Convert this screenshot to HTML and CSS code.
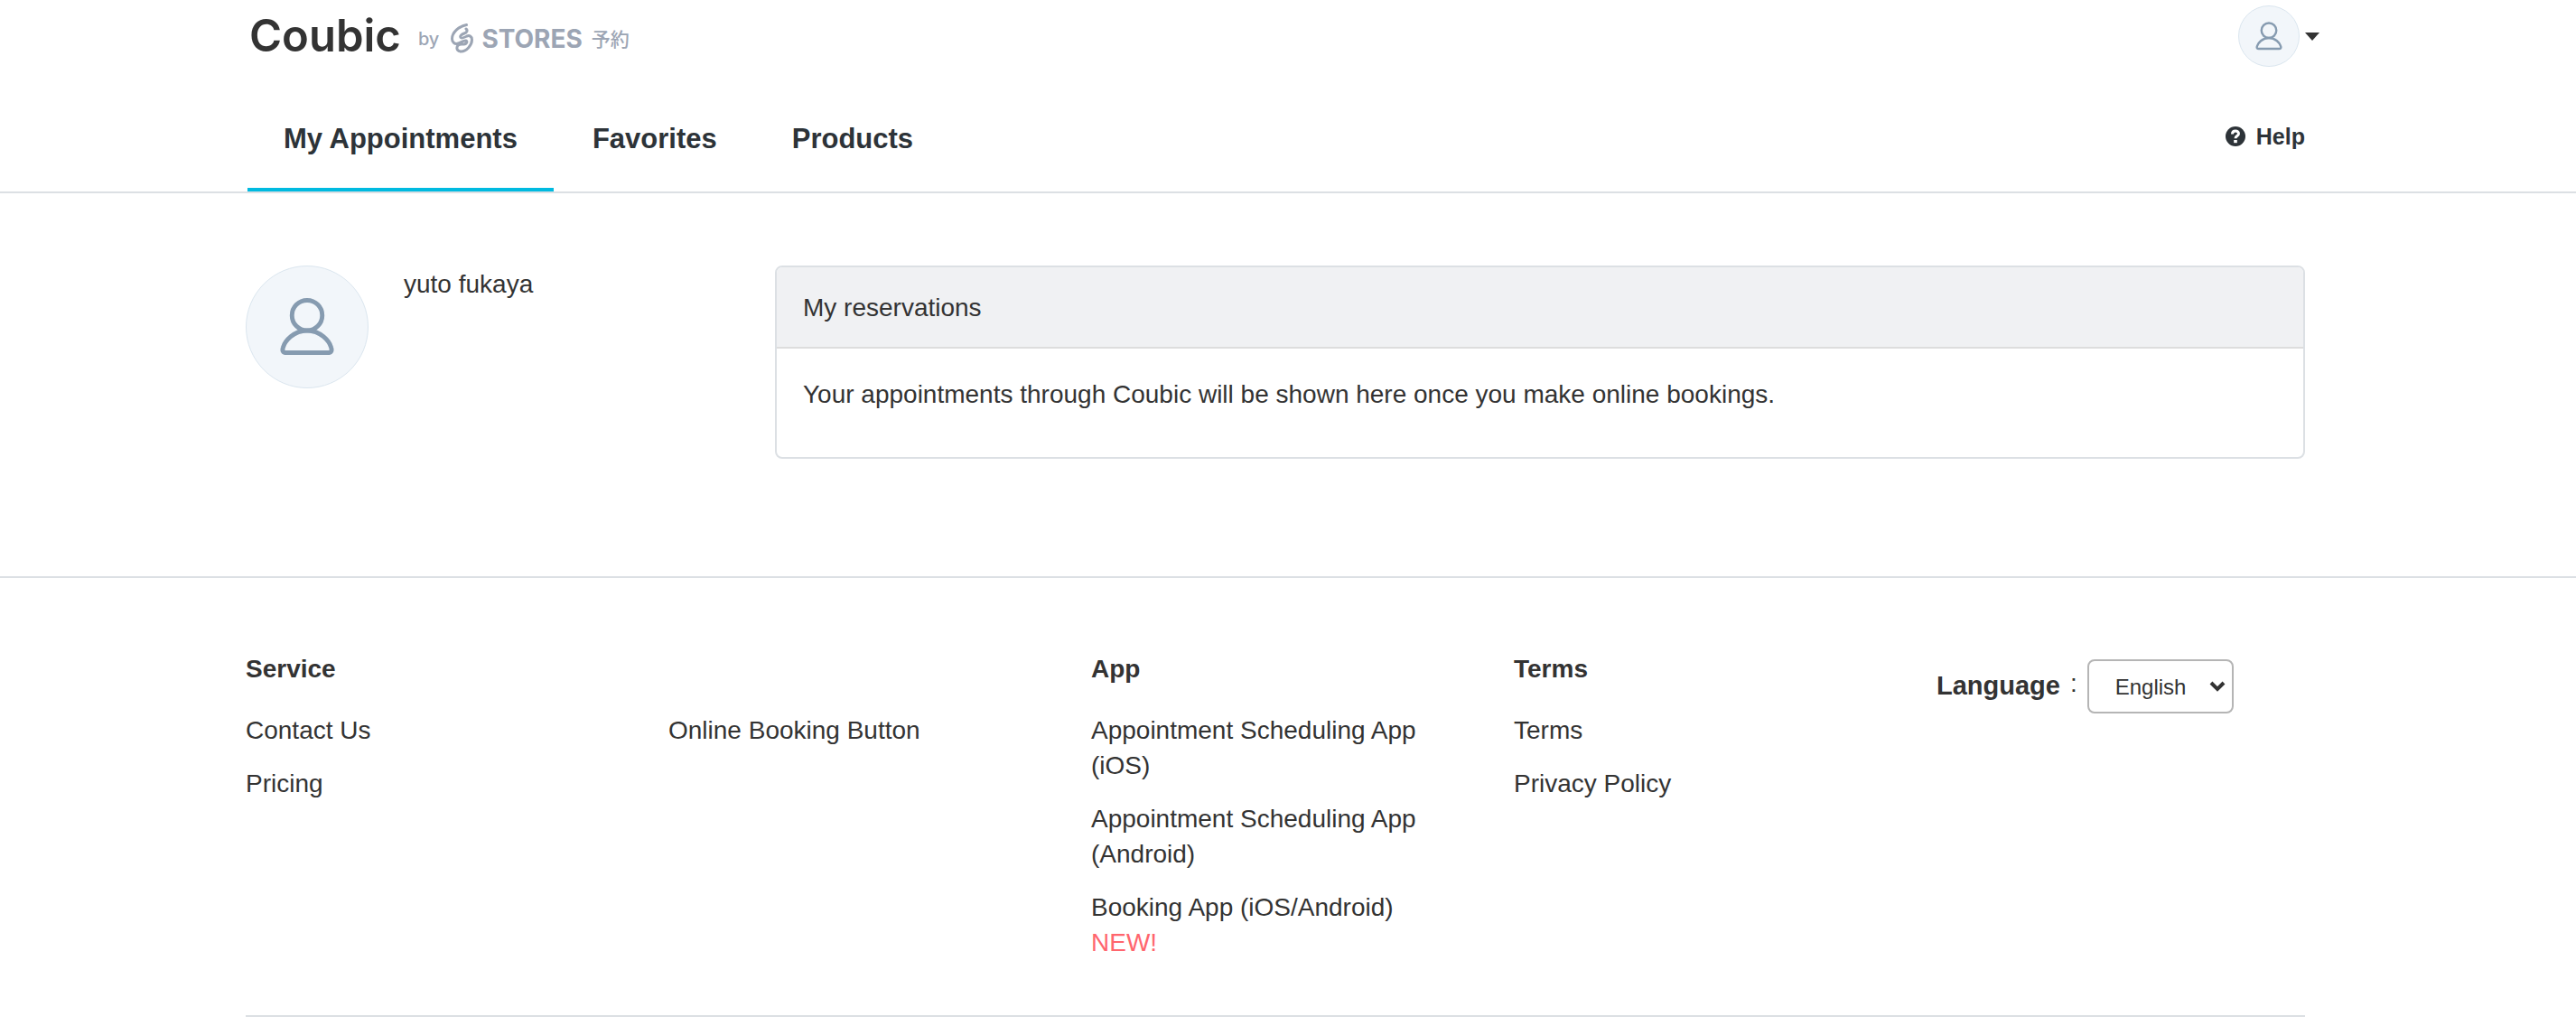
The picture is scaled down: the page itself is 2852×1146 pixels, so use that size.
FILE: index.html
```html
<!DOCTYPE html>
<html lang="en">
<head>
<meta charset="utf-8">
<title>My Appointments - Coubic</title>
<meta name="viewport" content="width=device-width, initial-scale=1">
<link rel="stylesheet" href="styles.css">
</head>
<body>
<svg class="defs" aria-hidden="true">
  <symbol id="person" viewBox="0 0 136 136">
    <circle cx="68" cy="55" r="17"/>
    <path d="M68 72C53 72 43 84 41 91Q39 97 45 97H91Q97 97 95 91C93 84 83 72 68 72Z"/>
  </symbol>
</svg>
<header class="header">
  <div class="container topbar">
    <a class="logo" href="#">
      <span class="logo-name">Coubic</span>
      <span class="logo-by">by</span>
      <svg class="logo-mark" viewBox="0 0 29 36" aria-hidden="true"><path d="M19.500 3.500C11 5 3.500 12 3.500 19c0 4 3 6.500 7 5 3-1 5-3 8-3 2.500 0 1.500 4-2 4-3 0-5-1-7 2-1.500 3 0 6 4 6 6 0 12-7 12-13 0-4-3-5-5.500-4-3 1.500-6 3-7 1.500s1-3.500 4-4.500 4-3.500 2-5"/></svg>
      <span class="logo-stores">STORES</span>
      <span class="logo-jp" lang="ja">予約</span>
    </a>
    <button class="account" type="button" aria-label="Account menu">
      <svg class="avatar avatar-small" aria-hidden="true"><use href="#person"/></svg>
      <span class="caret"></span>
    </button>
  </div>
  <div class="container navbar">
    <nav class="tabs">
      <a class="tab tab-active" href="#">My Appointments</a>
      <a class="tab" href="#">Favorites</a>
      <a class="tab" href="#">Products</a>
    </nav>
    <a class="help" href="#">
      <svg class="help-icon" viewBox="0 0 22 22" aria-hidden="true"><circle cx="11" cy="11" r="11"/><path d="M7.500 8.500C7.500 4 14.500 4 14.500 8c0 2.500-3.500 2.500-3.500 5.200"/><rect x="9.200" y="15" width="3.600" height="3.200"/></svg>
      Help
    </a>
  </div>
</header>
<main class="container main">
  <section class="profile">
    <svg class="avatar avatar-large" aria-hidden="true"><use href="#person"/></svg>
    <p class="profile-name">yuto fukaya</p>
  </section>
  <section class="panel">
    <h1 class="panel-title">My reservations</h1>
    <p class="panel-body">Your appointments through Coubic will be shown here once you make online bookings.</p>
  </section>
</main>
<footer class="footer">
  <div class="container">
    <div class="columns">
      <section>
        <h2 class="column-title">Service</h2>
        <ul class="links">
          <li><a href="#">Contact Us</a></li>
          <li><a href="#">Pricing</a></li>
        </ul>
      </section>
      <section class="column-untitled">
        <ul class="links">
          <li><a href="#">Online Booking Button</a></li>
        </ul>
      </section>
      <section>
        <h2 class="column-title">App</h2>
        <ul class="links">
          <li><a href="#">Appointment Scheduling App (iOS)</a></li>
          <li><a href="#">Appointment Scheduling App (Android)</a></li>
          <li><a href="#">Booking App (iOS/Android) <span class="new">NEW!</span></a></li>
        </ul>
      </section>
      <section>
        <h2 class="column-title">Terms</h2>
        <ul class="links">
          <li><a href="#">Terms</a></li>
          <li><a href="#">Privacy Policy</a></li>
        </ul>
      </section>
      <div class="language">
        <label class="language-label" for="language">Language</label>
        <span class="colon">:</span>
        <div class="select">
          <select id="language"><option>English</option><option>日本語</option></select>
          <svg class="chevron" viewBox="0 0 18 12" aria-hidden="true"><path d="M2 2l7 7 7-7"/></svg>
        </div>
      </div>
    </div>
  </div>
</footer>
</body>
</html>
```
FILE: styles.css
```css
* { box-sizing: border-box; }

body {
  margin: 0;
  padding: 0;
  background: #fff;
  color: #333;
  font: 28px/38px "Liberation Sans", "Noto Sans CJK JP", sans-serif;
}

h1, h2, p, ul { margin: 0; padding: 0; font-size: inherit; font-weight: inherit; }
ul { list-style: none; }
a { color: inherit; text-decoration: none; }
.defs { display: none; }

.header, .main, .footer { padding-right: 28px; }

.container { width: 100%; max-width: 2280px; margin: 0 auto; }

.header { border-bottom: 2px solid #dce0e4; }

.topbar { display: flex; justify-content: space-between; height: 80px; }

.logo { display: flex; align-items: flex-start; padding-left: 4px; color: #9ca5b4; }
.logo-name { color: #333; font: 600 49px/80px Inter, sans-serif; }
.logo-by { margin-left: 19px; font: 500 20px/86px Inter, sans-serif; }
.logo-mark { width: 29px; height: 36px; margin: 24px 7px 0 11px; fill: none; stroke: #9ca5b4; stroke-width: 3; stroke-linecap: round; }
.logo-stores { font: 700 28px/86px Inter, sans-serif; }
.logo-jp { margin-left: 10px; font: 500 21px/84px "Noto Sans CJK JP", sans-serif; }

.account { display: flex; align-items: center; gap: 6px; margin-right: -16px; padding: 0; border: 0; background: none; }
.caret { border: 8px solid transparent; border-top: 9px solid #333; border-bottom: 0; }

.avatar { flex: none; border: 1px solid #dbe6ef; border-radius: 50%; background: #f2f6fa; fill: none; stroke: #869bb0; stroke-linejoin: round; }
.avatar-small { width: 68px; height: 68px; stroke-width: 5; }
.avatar-large { width: 136px; height: 136px; stroke-width: 5; }

.navbar { display: flex; align-items: stretch; justify-content: space-between; height: 132px; color: #2d3338; font-weight: 700; }
.tabs { display: flex; gap: 3px; padding-left: 2px; }
.tab { display: flex; align-items: center; padding: 20px 40px 0; border-bottom: 4px solid transparent; font-size: 31px; }
.tab-active { border-color: #00bae0; }
.help { display: flex; align-items: center; gap: 12px; font-size: 25px; padding-top: 10px; }
.help-icon { width: 22px; height: 22px; fill: #2d3338; }
.help-icon path { fill: none; stroke: #fff; stroke-width: 3; }
.help-icon rect { fill: #fff; }

.main { display: grid; grid-template-columns: 586px 1fr; max-width: 2308px; padding-top: 80px; padding-bottom: 130px; }
.profile { display: flex; gap: 39px; }
.profile-name { padding-top: 2px; }
.panel { overflow: hidden; border: 2px solid #dce0e4; border-radius: 8px; }
.panel-title { padding: 26px 29px 24px; border-bottom: 2px solid #ddd; background: #f0f1f3; }
.panel-body { padding: 32px 29px 50px; }

.footer { border-top: 2px solid #dce0e4; }
.columns { display: grid; grid-template-columns: repeat(4, 468px) 1fr; padding: 82px 0 61px; border-bottom: 2px solid #dce0e4; }
.column-title { margin-bottom: 29px; font-weight: 700; }
.column-untitled { padding-top: 67px; }
.links { display: grid; gap: 20px; max-width: 380px; line-height: 39px; }
.new { display: block; color: #ff666e; }

.language { display: flex; align-items: center; align-self: start; padding-top: 8px; }
.language-label { padding-bottom: 2px; font-size: 29px; font-weight: 700; }
.colon { margin: 0 11px; padding-bottom: 6px; }
.select { display: grid; align-items: center; }
.select > * { grid-area: 1 / 1; }
.select select { width: 162px; height: 60px; padding: 0 29px; appearance: none; border: 2px solid #b5b5b5; border-radius: 8px; background: #fff; color: #333; font: 24px "Liberation Sans", "Noto Sans CJK JP", sans-serif; }
.chevron { justify-self: end; width: 18px; height: 12px; margin-right: 9px; fill: none; stroke: #333; stroke-width: 4; pointer-events: none; }
```
